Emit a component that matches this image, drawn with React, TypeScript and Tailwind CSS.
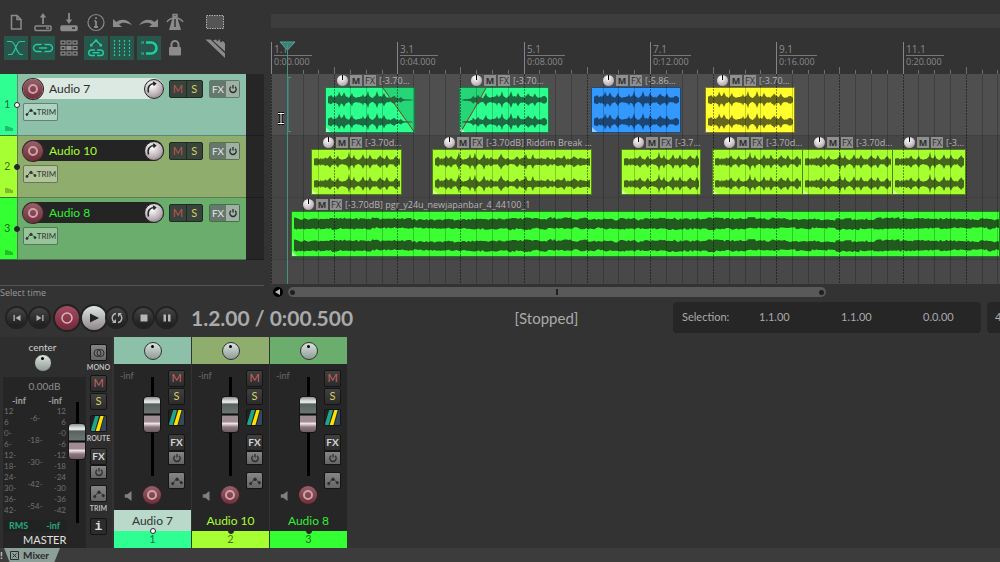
import type { ReactNode } from "react";
import clsx from "clsx";

const BEAT = 15.79;
const CLIP_HEIGHT = 46;

type Clip = {
  start: number;
  width?: number;
  title: string;
  color: string;
  wave: string;
  seed: number;
  fade?: "in" | "out";
  steady?: boolean;
};

type Track = {
  id: number;
  name: string;
  selected?: boolean;
  strip: string;
  panel: string;
  field: string;
  mixerName: string;
  lane: string;
  clips: Clip[];
};

const tracks: Track[] = [
  {
    id: 1,
    name: "Audio 7",
    selected: true,
    strip: "bg-[#2fff93]",
    panel: "bg-[#8cc0a8]",
    field: "bg-[#dce9e2] text-[#2c2c2c]",
    mixerName: "bg-[#b9d9ca] text-[#333333]",
    lane: "bg-[#4f4f4f]",
    clips: [
      { start: 54, width: 90, title: "[-3.70...", color: "bg-[#2dff8e]", wave: "#1d6b43", seed: 1, fade: "out" },
      { start: 188, width: 90, title: "[-3.70...", color: "bg-[#2dff8e]", wave: "#1d6b43", seed: 1, fade: "in" },
      { start: 320, width: 90, title: "[-5.86...", color: "bg-[#3399ff]", wave: "#1b4673", seed: 1 },
      { start: 434, width: 90, title: "[-3.70...", color: "bg-[#ffff2e]", wave: "#67671d", seed: 1 },
    ],
  },
  {
    id: 2,
    name: "Audio 10",
    strip: "bg-[#a6ff33]",
    panel: "bg-[#8fad6d]",
    field: "bg-[#242424] text-[#a6ff33]",
    mixerName: "text-[#a6ff33]",
    lane: "bg-[#464646]",
    clips: [
      { start: 40, width: 91, title: "[-3.70d...", color: "bg-[#a6ff2e]", wave: "#44661d", seed: 2 },
      { start: 161, width: 160, title: "[-3.70dB] Riddim Break ...", color: "bg-[#a6ff2e]", wave: "#44661d", seed: 3 },
      { start: 350, width: 80, title: "[-3.7...", color: "bg-[#a6ff2e]", wave: "#44661d", seed: 2 },
      { start: 441, width: 91, title: "[-3.70d...", color: "bg-[#a6ff2e]", wave: "#44661d", seed: 2 },
      { start: 531, width: 91, title: "[-3.70d...", color: "bg-[#a6ff2e]", wave: "#44661d", seed: 2 },
      { start: 621, width: 74, title: "[-3...", color: "bg-[#a6ff2e]", wave: "#44661d", seed: 2 },
    ],
  },
  {
    id: 3,
    name: "Audio 8",
    strip: "bg-[#33ff33]",
    panel: "bg-[#6aad6d]",
    field: "bg-[#242424] text-[#33ee33]",
    mixerName: "text-[#33ee33]",
    lane: "bg-[#464646]",
    clips: [
      { start: 20, title: "[-3.70dB] pgr_y24u_newjapanbar_4_44100_1", color: "bg-[#3bff33]", wave: "#22591f", seed: 4, steady: true },
    ],
  },
];

const rulerMarks = [
  { bar: "1.1", time: "0:00.000" },
  { bar: "3.1", time: "0:04.000" },
  { bar: "5.1", time: "0:08.000" },
  { bar: "7.1", time: "0:12.000" },
  { bar: "9.1", time: "0:16.000" },
  { bar: "11.1", time: "0:20.000" },
];

const noise = (n: number, seed: number) => {
  const v = Math.sin(n * 12.9898 + seed * 78.233) * 43758.5453;
  return v - Math.floor(v);
};

// peak height of the signal at one pixel column
const peak = (x: number, clip: Clip) => {
  if (clip.steady) {
    return 4 + noise(x >> 1, clip.seed) * 1.6 + Math.sin(x / 31) * 0.6 + (noise(x >> 3, 9) > 0.7 ? 1 : 0);
  }
  const hit = Math.floor(x / 8);
  const offset = 2 + Math.floor(noise(hit, 6) * 4);
  const strength = 1 + noise(hit, clip.seed) * 6;
  const value = 2 + noise(x, 7) * 1.8 + strength * Math.exp(-Math.abs((x % 8) - offset) / 1.2);
  if (clip.fade === "out" && x > 58) return value * Math.max(0.1, (88 - x) / 30);
  if (clip.fade === "in" && x < 26) return value * Math.max(0.1, x / 26);
  return value;
};

const wavePath = (clip: Clip, center: number) => {
  const length = clip.width ? clip.width - 2 : 2400;
  const top: string[] = [];
  const bottom: string[] = [];
  for (let x = 2; x < length; x += 1) {
    top.push(`${x},${(center - peak(x, clip)).toFixed(1)}`);
    bottom.unshift(`${x},${(center + peak(x + (clip.steady ? 40 : 0), clip) * 0.9).toFixed(1)}`);
  }
  return `M${top.join("L")}L${bottom.join("L")}Z`;
};

const Glyph = ({ children, className = "size-6" }: { children: ReactNode; className?: string }) => (
  <svg className={className} viewBox="0 0 24 24" fill="none" stroke="currentColor" strokeWidth="1.5" aria-hidden="true">
    {children}
  </svg>
);

const topTools = [
  {
    label: "New project",
    icon: <path d="M7.500 5.500h5.500l4 4v9.500h-9.500zM13 5.500v4h4" />,
  },
  {
    label: "Open project",
    icon: (
      <>
        <rect x="4" y="16" width="16" height="4.500" rx="1" />
        <path d="M12 14V5" strokeWidth="1.800" />
        <path d="M8.800 7.500L12 3l3.200 4.500z" fill="currentColor" stroke="none" />
        <path d="M15 18.200h3" />
      </>
    ),
  },
  {
    label: "Save project",
    icon: (
      <>
        <rect x="4" y="16" width="16" height="4.500" rx="1" fill="currentColor" />
        <path d="M12 3v8" strokeWidth="1.800" />
        <path d="M8.800 9.500L12 14l3.200-4.500z" fill="currentColor" stroke="none" />
        <path d="M15 18.200h3" stroke="#333333" />
      </>
    ),
  },
  {
    label: "Project settings",
    icon: (
      <>
        <circle cx="12" cy="12.500" r="8" strokeWidth="1.200" />
        <path d="M12 11v6M10 17h4M10.500 11H12M12 7.300v1.800" strokeWidth="1.800" />
      </>
    ),
  },
  {
    label: "Undo",
    icon: <path d="M3 9v8h9l-3-2.700c3-2.300 8-2.300 13 1.200C18 9 11 8.500 6.500 12z" fill="currentColor" stroke="none" />,
  },
  {
    label: "Redo",
    icon: <path d="M21 9v8h-9l3-2.700c-3-2.300-8-2.300-13 1.200C6 9 13 8.500 17.500 12z" fill="currentColor" stroke="none" />,
  },
  {
    label: "Metronome",
    icon: (
      <>
        <path d="M9.500 8h5L18 20H6z" fill="currentColor" stroke="none" />
        <path d="M12 9v8" stroke="#333333" />
        <path d="M4 12c3-5.500 13-5.500 16 0M10 4.500h4v2h-4z" />
      </>
    ),
  },
];

const bottomTools = [
  {
    label: "Auto-crossfade",
    on: true,
    icon: <path d="M3 5.500h4c5 0 5 13 10 13h2M21 5.500h-5c-4 0-5 13-9 13H4" strokeWidth="1.200" />,
  },
  {
    label: "Item grouping",
    on: true,
    icon: (
      <>
        <rect x="2.500" y="8.500" width="19" height="7" rx="3.500" />
        <path d="M12 7.500v2.500M12 14v2.500" stroke="#29564b" strokeWidth="3" />
        <path d="M8 12h8" />
      </>
    ),
  },
  {
    label: "Ripple editing",
    icon: (
      <>
        {[5, 10.5, 16].map((y) =>
          [4, 10, 16].map((x) => (
            <rect key={`${x}-${y}`} x={x} y={y} width="4" height="3" strokeWidth="1.200" fill={x === 10 && y === 10.5 ? "currentColor" : "none"} />
          )),
        )}
      </>
    ),
  },
  {
    label: "Envelope points move with items",
    on: true,
    icon: (
      <>
        <path d="M7 9l5-4.500L17 9" />
        <path d="M6 8h2.500v2.500H6zM10.800 3.500h2.500V6h-2.500zM15.500 8H18v2.500h-2.500z" fill="currentColor" stroke="none" />
        <path d="M11 14H7.500a2.700 2.700 0 0 0 0 5.500H11M13 14h3.500a2.700 2.700 0 0 1 0 5.500H13M8.500 16.800h7" />
      </>
    ),
  },
  {
    label: "Grid lines",
    on: true,
    icon: <path d="M4.500 4v16M9.500 4v16M14.500 4v16M19.500 4v16" strokeDasharray="2 1.500" strokeWidth="1.200" />,
  },
  {
    label: "Snap",
    on: true,
    icon: (
      <>
        <path d="M9 6.500h5a5.500 5.500 0 0 1 0 11H9" strokeWidth="2.600" />
        <path d="M4.500 6.500H7M4.500 17.500H7" strokeWidth="2.600" strokeDasharray="1 .8" />
      </>
    ),
  },
  {
    label: "Locking",
    icon: (
      <>
        <rect x="6" y="11" width="12" height="8.500" rx="1" fill="currentColor" stroke="none" />
        <path d="M8.500 11V8.500a3.500 3.500 0 0 1 7 0V11" strokeWidth="2" />
      </>
    ),
  },
];

const Toolbar = () => (
  <div className="flex h-[74px] items-start gap-4 pl-1 pt-2.5 text-[#8b8b8b]">
    <div className="flex w-[183px] flex-col gap-0.5">
      <div className="flex justify-between">
        {topTools.map((tool) => (
          <button key={tool.label} aria-label={tool.label}>
            <Glyph>{tool.icon}</Glyph>
          </button>
        ))}
      </div>
      <div className="flex justify-between">
        {bottomTools.map((tool) => (
          <button key={tool.label} aria-label={tool.label} className={clsx(tool.on && "bg-[#29564b] text-[#25c9a2]")}>
            <Glyph>{tool.icon}</Glyph>
          </button>
        ))}
      </div>
    </div>
    <div className="flex flex-col gap-0.5">
      <button aria-label="Marquee selection">
        <Glyph>
          <rect x="3.500" y="5.500" width="17" height="13" fill="#555555" strokeDasharray="1.500 1" strokeWidth="1" stroke="#b0b0b0" />
        </Glyph>
      </button>
      <button aria-label="Razor edit">
        <Glyph>
          <path d="M2.500 3.500h5L22 17.500V22z" fill="currentColor" stroke="none" />
          <path d="M10 4.500l3-1 1.500 2L16.500 3l1 3.500L20 5l2 2.500v8z" fill="currentColor" stroke="none" />
        </Glyph>
      </button>
    </div>
  </div>
);

const EnvelopeIcon = ({ className }: { className: string }) => (
  <svg className={className} viewBox="0 0 14 10" fill="currentColor" stroke="currentColor" aria-hidden="true">
    <path d="M2 8l4-5 2 0 4 4" fill="none" />
    <circle cx="2" cy="8" r="1.300" />
    <circle cx="7" cy="3" r="1.500" />
    <circle cx="12" cy="7" r="1.300" />
  </svg>
);

const PowerIcon = () => (
  <svg className="size-2.5" viewBox="0 0 10 10" fill="none" stroke="currentColor" strokeWidth="1.300" aria-hidden="true">
    <path d="M3 2.800a3.200 3.200 0 1 0 4 0M5 1v3.500" />
  </svg>
);

const RecordButton = ({ className }: { className: string }) => (
  <button
    aria-label="Record arm"
    className={clsx("flex shrink-0 items-center justify-center rounded-full bg-linear-to-b from-[#96606a] to-[#6e2f3a] ring-1 ring-[#3b2226]", className)}
  >
    <span className="size-2.5 rounded-full border-2 border-[#d0a2a7]" />
  </button>
);

const TrackPanel = ({ track }: { track: Track }) => (
  <div className="flex h-[62px]">
    <div className={clsx("relative flex w-[17px] shrink-0 items-center border-b border-[#3c6b4f] pl-1", track.strip)}>
      <span className="text-[11px] text-black/60">{track.id}</span>
      <span className={clsx("absolute -right-[3px] z-10 size-[6px] rounded-full border border-[#262626]", track.selected ? "bg-white" : "bg-[#262626]")} />
      <svg className="absolute bottom-1 left-[5px] h-[5px] w-2" viewBox="0 0 8 5" fill="#000000" opacity=".25" aria-hidden="true">
        <path d="M0 0h3l1 1h2v1h2v3H0z" />
      </svg>
    </div>
    <div className={clsx("flex flex-1 flex-col gap-1 border-b border-l border-black/30 pt-1 pl-[5px]", track.panel)}>
      <div className="flex items-center">
        <div className={clsx("flex h-[21px] w-[141px] items-center rounded-full", track.field)}>
          <RecordButton className="size-[20px]" />
          <span className="ml-1.5 flex-1 text-[12px] leading-4">{track.name}</span>
          <button
            aria-label={`${track.name} volume`}
            className="size-[20px] rounded-full border border-[#262626] bg-[radial-gradient(circle_at_40%_30%,#ffffff,#b9adb3_60%,#6d6268)]"
          >
            <svg viewBox="0 0 18 18" fill="none" stroke="#262626" strokeWidth="1.500" aria-hidden="true">
              <path d="M3.500 12.500C2 7 5 3 10 3.500M8 1.800l2.500 1.700L8.500 5.500" />
            </svg>
          </button>
        </div>
        <div className="ml-[5px] flex h-[18px] w-[34px] rounded-xs border border-[#1f2a24] bg-[#38433c] text-[11px] leading-4">
          <button className="flex-1 border-r border-[#1f2a24] text-[#c4544e]">M</button>
          <button className="flex-1 text-[#d7cf62]">S</button>
        </div>
        <div className="ml-[6px] flex h-[18px] w-[31px] rounded-xs border border-black/35 text-[10px] leading-4">
          <button className="flex-1 bg-[#66776d] text-[#e2e9e4]">FX</button>
          <button aria-label="Bypass" className="flex w-[13px] items-center justify-center bg-[#9fb0a5] text-[#2c2c2c]">
            <PowerIcon />
          </button>
        </div>
      </div>
      <button className="flex h-[18px] w-[35px] items-center justify-center rounded-xs border border-black/40 bg-white/30 text-[8px] text-[#2f3632]">
        <EnvelopeIcon className="h-2 w-3" />
        TRIM
      </button>
    </div>
    <div className="w-[18px] shrink-0 border-b border-[#1c1c1c] bg-[#262626]" />
  </div>
);

const Ruler = () => (
  <div className="relative h-[46px] overflow-hidden">
    <svg className="absolute inset-0 size-full" aria-hidden="true">
      {Array.from({ length: 160 }, (_, i) => (
        <rect
          key={i}
          x={Math.round(i * BEAT)}
          y={i % 8 === 0 ? 14 : i % 4 === 0 ? 39 : 42}
          width="1"
          height="32"
          fill={i % 8 === 0 ? "#858585" : "#707070"}
        />
      ))}
    </svg>
    {rulerMarks.map((mark, i) => (
      <div key={mark.bar} className="absolute top-[15px] text-[#8a8a8a]" style={{ left: Math.round(i * BEAT * 8) + 3 }}>
        <div className="w-[38px] border-b border-[#777777] text-[10px] leading-3">{mark.bar}</div>
        <div className="text-[9px] leading-3">{mark.time}</div>
      </div>
    ))}
  </div>
);

const ClipView = ({ clip }: { clip: Clip }) => (
  <div className="absolute inset-y-0 right-0" style={{ left: clip.start, width: clip.width }}>
    <div className="relative z-10 flex h-[13px] items-center gap-0.5 pl-3 text-[9px] leading-3 whitespace-nowrap text-[#b5b5b5]">
      <button
        aria-label="Item volume"
        className="flex size-[11px] shrink-0 justify-center rounded-full bg-[radial-gradient(circle_at_40%_30%,#ffffff,#c4b9be_60%,#857a80)]"
      >
        <span className="h-[5px] w-px bg-black" />
      </button>
      <button className="h-[11px] w-3 shrink-0 bg-[#8f8f8f] leading-[11px] font-bold text-[#2f2f2f]">M</button>
      <button className="h-[11px] w-3 shrink-0 bg-[#8f8f8f] leading-[11px] text-[#2f2f2f]">FX</button>
      <span className="pl-px">{clip.title}</span>
    </div>
    <div className={clsx("border border-black/50", clip.color)} style={{ height: CLIP_HEIGHT }}>
      <svg className="block size-full overflow-hidden" aria-hidden="true">
        {clip.fade === "out" && <path d="M57 0h33v46z" fill="#000000" opacity=".16" />}
        {clip.fade === "in" && <path d="M0 0h26L0 46z" fill="#000000" opacity=".16" />}
        <path d={wavePath(clip, 12)} fill={clip.wave} />
        <path d={wavePath(clip, 34)} fill={clip.wave} />
        {clip.fade === "out" && <path d="M57 0Q70 18 89 45" stroke="#8a3a1c" fill="none" />}
        {clip.fade === "in" && <path d="M0 45Q14 22 26 0" stroke="#8a3a1c" fill="none" />}
        <path d="M0 39l6 6H0z" fill="#ffffff" opacity=".5" />
      </svg>
    </div>
  </div>
);

const Arrange = () => (
  <div className="relative flex min-w-0 flex-1 flex-col overflow-hidden font-['Open_Sans',sans-serif]">
    <div className="mt-3.5 h-3.5 bg-[#3d3d3d]" />
    <Ruler />
    <div className="relative bg-[#484848]">
      {tracks.map((track) => (
        <div key={track.id} className={clsx("relative h-[62px] overflow-hidden border-b border-[#404040]", track.lane)}>
          {track.clips.map((clip) => (
            <ClipView key={clip.start} clip={clip} />
          ))}
        </div>
      ))}
      <div className="h-6" />
      <svg className="pointer-events-none absolute inset-0 size-full" aria-hidden="true">
        {Array.from({ length: 160 }, (_, i) => (
          <path
            key={i}
            d={`M${Math.round(i * BEAT) + 0.5} 0V210`}
            stroke="#000000"
            strokeOpacity={i % 4 === 0 ? 0.45 : 0.2}
            strokeDasharray={i % 4 === 0 ? "2 1" : undefined}
          />
        ))}
      </svg>
    </div>
    {/* edit cursor, selection bracket and mouse pointer */}
    <svg className="pointer-events-none absolute top-0 left-0 h-[284px] w-8" fill="none" aria-hidden="true">
      <path d="M9 42h15l-7.500 8z" fill="#3f7f73" stroke="#55a797" />
      <path d="M16.500 44v240M20 77.500h-3v54h3" stroke="#3f9484" />
      <path d="M7 113.500h2.500m1 0H13M10 114v9M7 123.500h2.500m1 0H13" stroke="#000000" strokeWidth="3" />
      <path d="M7 113.500h6M10 114v9M7 123.500h6" stroke="#ffffff" />
    </svg>
    <div className="flex h-4 items-center gap-[5px] pl-0.5">
      <button aria-label="Scroll left" className="flex size-[10px] items-center justify-center rounded-full bg-black">
        <svg className="size-1.5" viewBox="0 0 6 6" fill="#bbbbbb" aria-hidden="true">
          <path d="M5 0v6L0 3z" />
        </svg>
      </button>
      <div className="flex h-[10px] w-[74%] items-center justify-between rounded-full bg-[#595959] px-0.5">
        <span className="size-[5px] rounded-full bg-[#202020]" />
        <span className="h-1.5 w-0.5 bg-[#202020]" />
        <span className="size-[5px] rounded-full bg-[#202020]" />
      </div>
    </div>
  </div>
);

const TransportButton = ({ label, className, children }: { label: string; className?: string; children: ReactNode }) => (
  <button
    aria-label={label}
    className={clsx(
      "flex shrink-0 items-center justify-center rounded-full ring-2 ring-[#222222]",
      className ?? "size-[19px] bg-linear-to-b from-[#454545] to-[#1d1d1d] text-[#b5b5b5]",
    )}
  >
    <svg className="size-3" viewBox="0 0 12 12" fill="currentColor" aria-hidden="true">
      {children}
    </svg>
  </button>
);

const Transport = () => (
  <div className="mb-0.5 flex h-[35px] items-center text-[#aaaaaa]">
    <div className="flex w-[179px] shrink-0 items-center pl-[7px]">
      <div className="flex gap-1">
        <TransportButton label="Go to start">
          <path d="M2.500 3h1.300v6H2.500zM9.500 3v6L4.500 6z" />
        </TransportButton>
        <TransportButton label="Go to end">
          <path d="M8.200 3h1.300v6H8.200zM2.500 3v6l5-3z" />
        </TransportButton>
      </div>
      <div className="ml-[6px] flex items-center gap-[3px]">
        <TransportButton label="Record" className="size-[24px] bg-linear-to-b from-[#a44c60] to-[#74293d] text-[#dcb4bc]">
          <circle cx="6" cy="6" r="5" fill="none" stroke="currentColor" strokeWidth="1.500" />
        </TransportButton>
        <TransportButton label="Play" className="size-[24px] bg-linear-to-b from-[#dfe8e4] to-[#8f868c] text-[#222222]">
          <path d="M2 1.500v9L11 6z" />
        </TransportButton>
        <TransportButton label="Repeat" className="-ml-0.5 size-[19px] bg-linear-to-b from-[#454545] to-[#1d1d1d] text-[#b5b5b5]">
          <path d="M3.500 10A4.600 4.600 0 0 1 5 1.500M8.500 2A4.600 4.600 0 0 1 7 10.500" fill="none" stroke="currentColor" strokeWidth="1.400" />
          <path d="M1 11h4V7zM11 1H7v4z" />
        </TransportButton>
      </div>
      <div className="ml-[8px] flex gap-1">
        <TransportButton label="Stop">
          <path d="M2.500 2.500h7v7h-7z" />
        </TransportButton>
        <TransportButton label="Pause">
          <path d="M2.500 2.500H5v7H2.500zM7 2.500h2.500v7H7z" />
        </TransportButton>
      </div>
    </div>
    <div className="w-[183px] shrink-0 pl-3 text-[21px] leading-7 font-bold whitespace-nowrap">1.2.00 / 0:00.500</div>
    <div className="flex-1 pl-[58px] text-center text-[15px] leading-6">[Stopped]</div>
    <div className="mr-1.5 flex h-[31px] w-[308px] shrink-0 items-center rounded-sm bg-[#262626] pl-[9px] text-[11px]">
      <span className="w-[77px]">Selection:</span>
      <span className="w-[82px]">1.1.00</span>
      <span className="w-[82px]">1.1.00</span>
      <span>0.0.00</span>
    </div>
    <div className="flex h-[31px] w-[13px] shrink-0 items-center rounded-l-sm bg-[#262626] pl-2 text-[11px]">4</div>
  </div>
);

const Fader = ({ label, value, className }: { label: string; value: number; className: string }) => (
  <input
    type="range"
    aria-label={label}
    defaultValue={value}
    className={clsx(
      "w-[18px] appearance-none bg-[linear-gradient(to_right,transparent_8px,#000_8px,#000_11px,transparent_11px)] [direction:rtl] [writing-mode:vertical-lr]",
      "[&::-webkit-slider-thumb]:h-[37px] [&::-webkit-slider-thumb]:w-[18px] [&::-webkit-slider-thumb]:appearance-none [&::-webkit-slider-thumb]:rounded-[4px] [&::-webkit-slider-thumb]:border [&::-webkit-slider-thumb]:border-[#151515]",
      "[&::-webkit-slider-thumb]:bg-[linear-gradient(#8d9391_0%,#dfe3e1_12%,#dfe3e1_16%,#59625f_20%,#6a7471_46%,#111_48%,#111_52%,#a08c93_54%,#a08c93_70%,#f0e6ea_76%,#8b767d_86%,#6f5d63_100%)]",
      className,
    )}
  />
);

const PanKnob = ({ label }: { label: string }) => (
  <button
    aria-label={label}
    className="flex size-[18px] shrink-0 justify-center rounded-full border border-[#333333] bg-linear-to-b from-[#dbe5e0] to-[#8f9b95] pt-0.5"
  >
    <span className="size-[3px] rounded-full bg-black" />
  </button>
);

const square = "flex h-[17px] w-[17px] items-center justify-center rounded-xs border border-[#151515]";
const dark = "bg-linear-to-b from-[#404040] to-[#2c2c2c] text-[11px]";
const light = "bg-linear-to-b from-[#858585] to-[#666666] text-[#2c2c2c]";

const MuteSolo = () => (
  <div className="flex flex-col gap-px">
    <button className={clsx(square, dark, "text-[#d0605c]")}>M</button>
    <button className={clsx(square, dark, "text-[#d7cf62]")}>S</button>
  </div>
);

const RouteButton = () => (
  <button aria-label="Routing" className={clsx(square, "overflow-hidden bg-[#222222]")}>
    <svg className="size-full" viewBox="0 0 16 16" aria-hidden="true">
      <path d="M4.500 0h4L4 16H0v-1z" fill="#20a58c" />
      <path d="M10 0h3.500L9 16H5z" fill="#ffe100" />
      <path d="M14.500 0H16v16h-6z" fill="#35485c" />
    </svg>
  </button>
);

const FxButtons = () => (
  <div className="flex flex-col">
    <button className={clsx(square, "bg-linear-to-b from-[#404040] to-[#2c2c2c] text-[10px] font-bold text-[#d5d5d5]")}>FX</button>
    <button aria-label="Bypass effects" className={clsx("flex h-[14px] w-[17px] items-center justify-center border border-[#151515]", light)}>
      <PowerIcon />
    </button>
  </div>
);

const TrimButton = () => (
  <button aria-label="Envelope" className={clsx(square, light)}>
    <EnvelopeIcon className="h-2.5 w-3" />
  </button>
);

const Caption = ({ children }: { children: ReactNode }) => (
  <span className="text-center text-[7px] leading-3 font-bold text-[#bdbdbd]">{children}</span>
);

const meterLevels = ["12", "6", "0", "6", "12", "18", "24", "30", "36", "42"];

const MasterStrip = () => (
  <div className="flex h-[211px] w-[112px] shrink-0 bg-[#2e2e2e]">
    <div className="flex w-[86px] flex-col pl-[3px]">
      <div className="flex h-[41px] flex-col items-center gap-px pt-1 pr-1 text-[10px] leading-3 text-[#d0d0d0]">
        center
        <PanKnob label="Master pan" />
      </div>
      <div className="flex flex-1 justify-between bg-[#252525] text-[#8e8e8e]">
        <div className="flex w-[63px] flex-col text-[9px]">
          <div className="pt-[3px] pl-5 text-center text-[10px] leading-3">0.00dB</div>
          <div className="flex justify-between pt-[3px] pr-1 pl-[9px] leading-[11px] font-bold text-[#a0a0a0]">
            <span>-inf</span>
            <span>-inf</span>
          </div>
          <div className="flex justify-between text-[8px] leading-[11px] text-[#707070]">
            <div className="pl-px">
              {meterLevels.map((level, i) => (
                <div key={i}>{i < 2 ? level : `${level}-`}</div>
              ))}
            </div>
            <div className="pt-0.5 text-center">
              {["-6-", "-18-", "-30-", "-42-", "-54-"].map((level) => (
                <div key={level} className="h-[22px] leading-[22px] first:mt-[-1px]">
                  {level}
                </div>
              ))}
            </div>
            <div className="text-right">
              {meterLevels.map((level, i) => (
                <div key={i}>{i < 2 ? level : `-${level}`}</div>
              ))}
            </div>
          </div>
          <div className="mt-[3px] flex justify-between bg-[#1f2422] px-1.5 leading-3 font-bold text-[#2aa57e]">
            <span>RMS</span>
            <span>-inf</span>
          </div>
          <div className="pl-5 text-center text-[11px] leading-4 text-[#e0e0e0]">MASTER</div>
        </div>
        <Fader label="Master volume" value={75} className="mt-[25px] h-[121px]" />
      </div>
    </div>
    <div className="flex flex-1 flex-col items-center pt-[7px] pr-px pl-0">
      <button aria-label="Mono" className={clsx(square, light)}>
        <svg className="size-3" viewBox="0 0 12 12" fill="none" stroke="currentColor" aria-hidden="true">
          <circle cx="4.500" cy="6" r="3.500" />
          <circle cx="7.500" cy="6" r="3.500" />
        </svg>
      </button>
      <Caption>MONO</Caption>
      <div className="mt-[2px]">
        <MuteSolo />
      </div>
      <div className="mt-[5px]">
        <RouteButton />
      </div>
      <Caption>ROUTE</Caption>
      <div className="mt-[4px]">
        <FxButtons />
      </div>
      <div className="mt-[6px]">
        <TrimButton />
      </div>
      <Caption>TRIM</Caption>
      <button aria-label="Master info" className={clsx(square, "mt-[4px] bg-[#2c2c2c] font-['Liberation_Mono',monospace] text-[13px] font-bold text-[#dddddd]")}>
        i
      </button>
    </div>
  </div>
);

const MixerStrip = ({ track }: { track: Track }) => (
  <div className="flex h-[211px] w-[77px] shrink-0 flex-col bg-[#262626]">
    <div className={clsx("flex h-[27px] items-center justify-center", track.panel)}>
      <PanKnob label={`${track.name} pan`} />
    </div>
    <div className="flex flex-1 justify-between px-[6px] pt-[6px]">
      <div className="flex w-[16px] flex-col justify-between pb-[9px] text-[9px] text-[#6a6a6a]">
        <span className="leading-3">-inf</span>
        <svg className="ml-1 size-2.5" viewBox="0 0 10 12" fill="#808080" aria-hidden="true">
          <path d="M0 4h3l5-4v12L3 8H0z" />
        </svg>
      </div>
      <div className="flex flex-col items-center gap-[10px] pt-[7px]">
        <Fader label={`${track.name} volume`} value={69} className="h-[99px]" />
        <RecordButton className="size-[18px]" />
      </div>
      <div className="flex flex-col">
        <MuteSolo />
        <div className="mt-1 mb-2">
          <RouteButton />
        </div>
        <FxButtons />
        <div className="mt-[7px]">
          <TrimButton />
        </div>
      </div>
    </div>
    <div className={clsx("flex h-[21px] items-center justify-center text-[12px]", track.mixerName)}>{track.name}</div>
    <div className={clsx("relative flex h-[17px] items-center justify-center text-[11px] text-black/60", track.strip)}>
      <span className={clsx("absolute -top-[3px] size-[6px] rounded-full border border-[#262626]", track.selected ? "bg-white" : "bg-[#262626]")} />
      {track.id}
    </div>
  </div>
);

const App = () => {
  return (
    <div className="flex min-h-screen flex-col overflow-hidden bg-[#333333] font-[Lato,sans-serif]">
      <div className="flex gap-[7px]">
        <div className="flex w-[264px] shrink-0 flex-col">
          <Toolbar />
          {tracks.map((track) => (
            <TrackPanel key={track.id} track={track} />
          ))}
          <div className="h-[26px] border-b border-[#555555]" />
          <div className="font-['Open_Sans',sans-serif] text-[9px] leading-[14px] text-[#999999]">Select time</div>
        </div>
        <Arrange />
      </div>
      <Transport />
      <div className="flex">
        <MasterStrip />
        <div className="ml-[2px] flex gap-px">
          {tracks.map((track) => (
            <MixerStrip key={track.id} track={track} />
          ))}
        </div>
      </div>
      <div className="flex min-h-3.5 flex-1 items-start bg-[#3c3c3c] text-[10px] leading-[14px] font-bold">
        <span className="w-1 text-[#cccccc]">!</span>
        <button className="flex h-3.5 w-14 items-center gap-1 bg-[#8c9f98] pl-1.5 text-[#2c2c2c] [clip-path:polygon(0_0,100%_0,90%_100%,10%_100%)]">
          <svg className="size-[9px]" viewBox="0 0 9 9" fill="none" stroke="currentColor" aria-hidden="true">
            <path d="M.5.5h8v8h-8zM2.500 2.500l4 4M6.500 2.500l-4 4" />
          </svg>
          Mixer
        </button>
      </div>
    </div>
  );
};

export default App;
